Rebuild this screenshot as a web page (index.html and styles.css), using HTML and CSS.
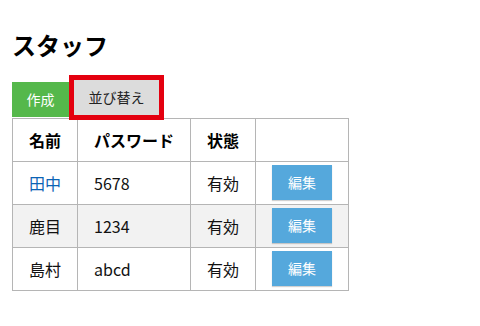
FILE: index.html
```html
<!DOCTYPE html>
<html lang="ja">
<head>
<meta charset="utf-8">
<title>スタッフ</title>
<link rel="stylesheet" href="styles.css">
</head>
<body>
<div class="page">
  <h1 class="title">スタッフ</h1>
  <div class="toolbar">
    <button class="btn btn-create">作成</button>
    <button class="btn btn-sort">並び替え</button>
  </div>
  <table class="staff">
    <thead>
      <tr><th>名前</th><th>パスワード</th><th>状態</th><th></th></tr>
    </thead>
    <tbody>
      <tr><td class="name link">田中</td><td>5678</td><td>有効</td><td><button class="btn btn-edit">編集</button></td></tr>
      <tr class="alt"><td class="name">鹿目</td><td>1234</td><td>有効</td><td><button class="btn btn-edit">編集</button></td></tr>
      <tr><td class="name">島村</td><td>abcd</td><td>有効</td><td><button class="btn btn-edit">編集</button></td></tr>
    </tbody>
  </table>
</div>
</body>
</html>
```
FILE: styles.css
```css
html, body {
  margin: 0;
  padding: 0;
  background: #ffffff;
}
body {
  font-family: "Noto Sans CJK JP", "Noto Sans", sans-serif;
  color: #111111;
}
.page {
  padding: 28px 12px 0 12px;
}
.title {
  margin: 0;
  font-size: 24px;
  line-height: 33.6px;
  font-weight: bold;
  color: #000000;
}
.toolbar {
  display: flex;
  align-items: flex-end;
  margin-top: 18px;
  margin-bottom: 1px;
}
.btn {
  font-family: inherit;
  font-size: 14px;
  height: 35px;
  line-height: 35px;
  border: 0;
  padding: 0 14.5px;
  margin: 0;
  cursor: pointer;
}
.btn-create {
  background: #55b84b;
  color: #ffffff;
}
.btn-sort {
  background: #dcdcdc;
  color: #222222;
  margin-left: 5px;
  margin-bottom: 2px;
  outline: 5px solid #e4000f;
}
.staff {
  border-collapse: collapse;
  font-size: 16px;
}
.staff th,
.staff td {
  border: 1px solid #b5b5b5;
  padding: 3px 16px;
  line-height: 36px;
  text-align: left;
  vertical-align: middle;
  white-space: nowrap;
}
.staff th {
  font-weight: bold;
  color: #000000;
}
.staff .alt td {
  background: #f2f2f2;
}
.staff .link {
  color: #0b63b5;
}
.btn-edit {
  display: inline-block;
  vertical-align: top;
  padding: 0 16px;
  background: #55a8dc;
  color: #ffffff;
  box-shadow: 0 1px 1px rgba(0, 0, 0, 0.18);
}
```
